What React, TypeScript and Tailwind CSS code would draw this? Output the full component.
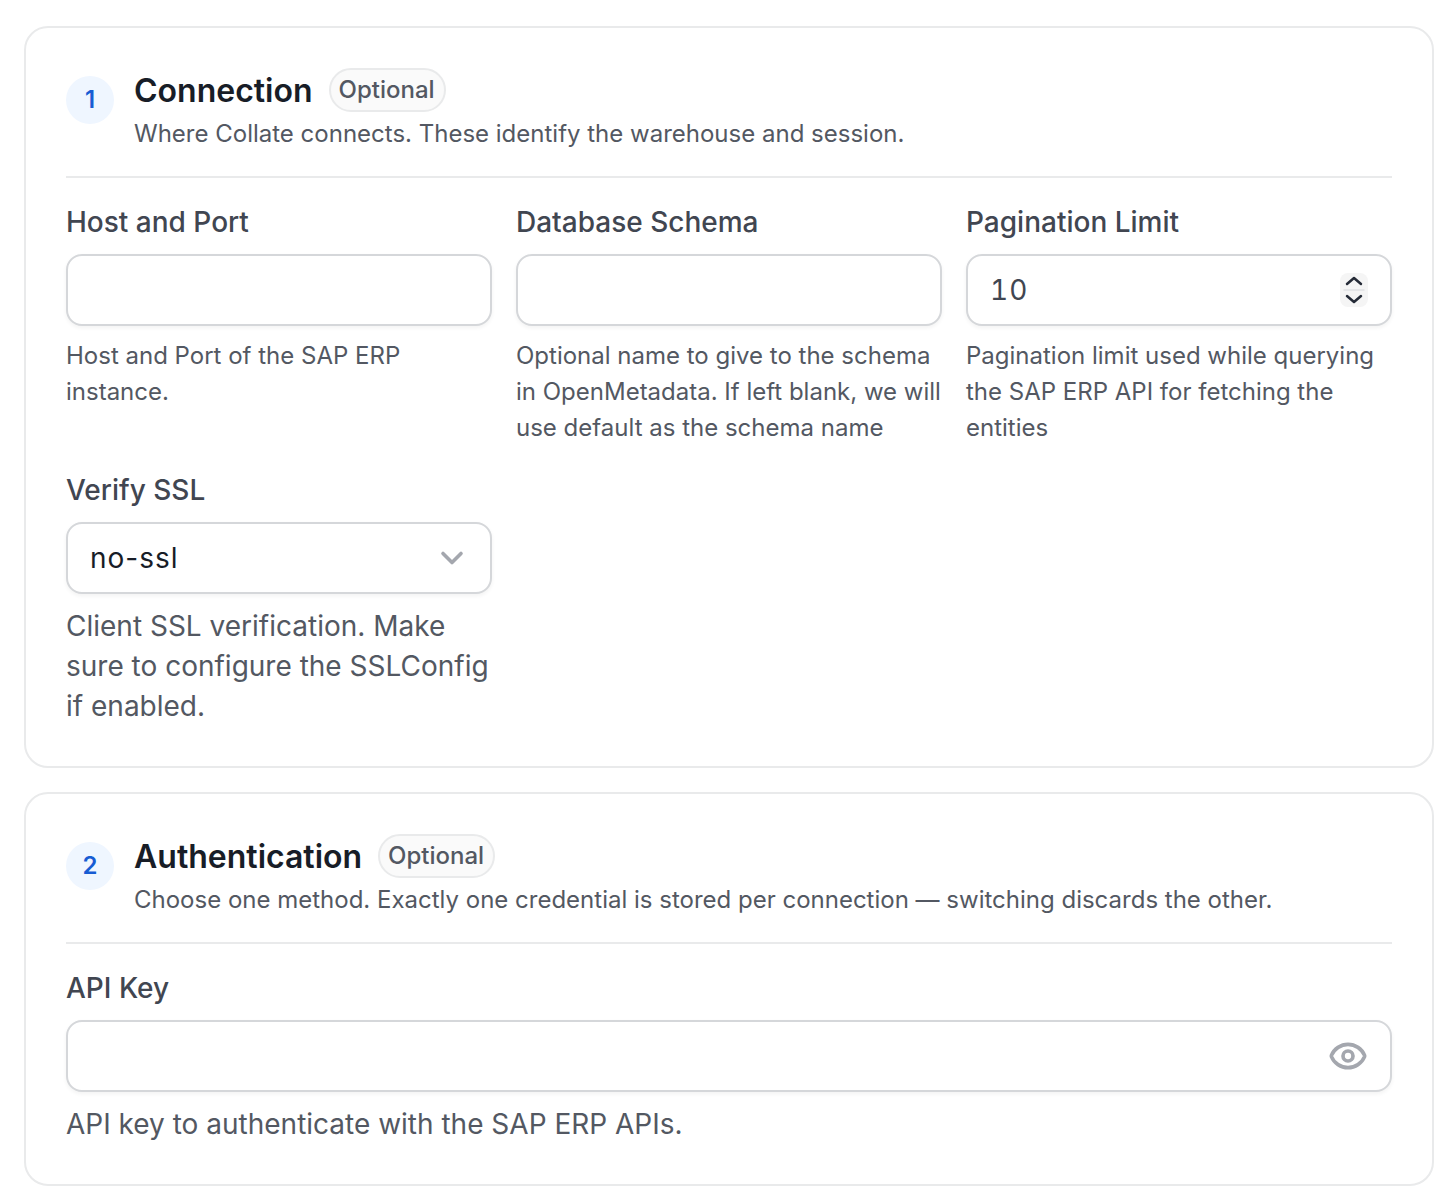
import { ChevronDown, Eye } from "lucide-react";

const inputCls =
  "h-[72px] w-full rounded-2xl border-2 border-[#d5d7da] bg-white shadow-[0_2px_4px_rgba(10,13,18,0.05)]";

const Section = ({
  num,
  title,
  desc,
  children,
}: {
  num: string;
  title: string;
  desc: string;
  children: React.ReactNode;
}) => (
  <section className="rounded-3xl border-2 border-[#e9eaeb] bg-white px-10 pt-10 pb-10">
    {/* HEADER */}
    <div className="flex gap-5 border-b-2 border-[#e9eaeb] pb-6">
      <div className="mt-2 flex h-12 w-12 shrink-0 items-center justify-center rounded-full bg-[#eff6ff] text-2xl leading-none font-semibold text-[#175cd3]">
        {num}
      </div>
      <div>
        <div className="flex h-11 items-center gap-4">
          <h2 className="pt-[2px] text-[32px] leading-[44px] font-semibold text-[#181d27]">{title}</h2>
          <span className="flex h-11 items-center rounded-full border-2 border-[#e9eaeb] bg-[#fafafa] pr-[9px] pl-2 text-2xl font-medium text-[#535862]">
            Optional
          </span>
        </div>
        <p className="mt-1 text-2xl leading-9 text-[#535862]">{desc}</p>
      </div>
    </div>
    {children}
  </section>
);

const Label = ({ children }: { children: React.ReactNode }) => (
  <label className="mb-3 block text-[28px] leading-10 font-medium text-[#414651]">{children}</label>
);

const Help = ({ children }: { children: React.ReactNode }) => (
  <p className="mt-3 text-2xl leading-9 text-[#535862]">{children}</p>
);

const HelpLarge = ({ children }: { children: React.ReactNode }) => (
  <p className="mt-3 text-[28px] leading-10 text-[#535862]">{children}</p>
);

export default function App() {
  return (
    <div className="flex flex-col gap-[24px] pt-[26px] pl-6 pr-[18px] font-['Inter',sans-serif]">
      <Section num="1" title="Connection" desc="Where Collate connects. These identify the warehouse and session.">
        <div className="mt-6 grid grid-cols-3 gap-x-6 gap-y-6">
          <div>
            <Label>Host and Port</Label>
            <div className={inputCls} />
            <Help>Host and Port of the SAP ERP instance.</Help>
          </div>
          <div>
            <Label>Database Schema</Label>
            <div className={inputCls} />
            <Help>Optional name to give to the schema in OpenMetadata. If left blank, we will use default as the schema name</Help>
          </div>
          <div>
            <Label>Pagination Limit</Label>
            <div className={`${inputCls} flex items-center justify-between pr-[22px] pl-[22px]`}>
              <span className="text-[28px] tracking-[1px] text-[#414651] tabular-nums">10</span>
              <div className="h-[34px] w-7 rounded-lg bg-[#f5f5f5]">
                <svg viewBox="0 0 28 34" width="28" height="34" fill="none" strokeLinecap="round" strokeLinejoin="round">
                  <path d="M7 11L14 5L21 11" stroke="#252b37" strokeWidth="2.5" />
                  <path d="M4 17H24" stroke="#e0e1e3" strokeWidth="1.5" />
                  <path d="M7 23L14 29L21 23" stroke="#252b37" strokeWidth="2.5" />
                </svg>
              </div>
            </div>
            <Help>Pagination limit used while querying the SAP ERP API for fetching the entities</Help>
          </div>
          <div>
            <Label>Verify SSL</Label>
            <div className={`${inputCls} flex items-center justify-between pr-5 pl-[22px]`}>
              <span className="text-[28px] tracking-[1px] text-[#181d27]">no-ssl</span>
              <ChevronDown size={36} strokeWidth={2.4} className="text-[#a4a7ae]" />
            </div>
            <HelpLarge>Client SSL verification. Make sure to configure the SSLConfig if enabled.</HelpLarge>
          </div>
        </div>
      </Section>

      <Section
        num="2"
        title="Authentication"
        desc="Choose one method. Exactly one credential is stored per connection — switching discards the other."
      >
        <div className="mt-6">
          <Label>API Key</Label>
          <div className={`${inputCls} flex items-center justify-end pr-[22px]`}>
            <Eye size={40} strokeWidth={2.2} className="text-[#a4a7ae]" />
          </div>
          <HelpLarge>API key to authenticate with the SAP ERP APIs.</HelpLarge>
        </div>
      </Section>
    </div>
  );
}
